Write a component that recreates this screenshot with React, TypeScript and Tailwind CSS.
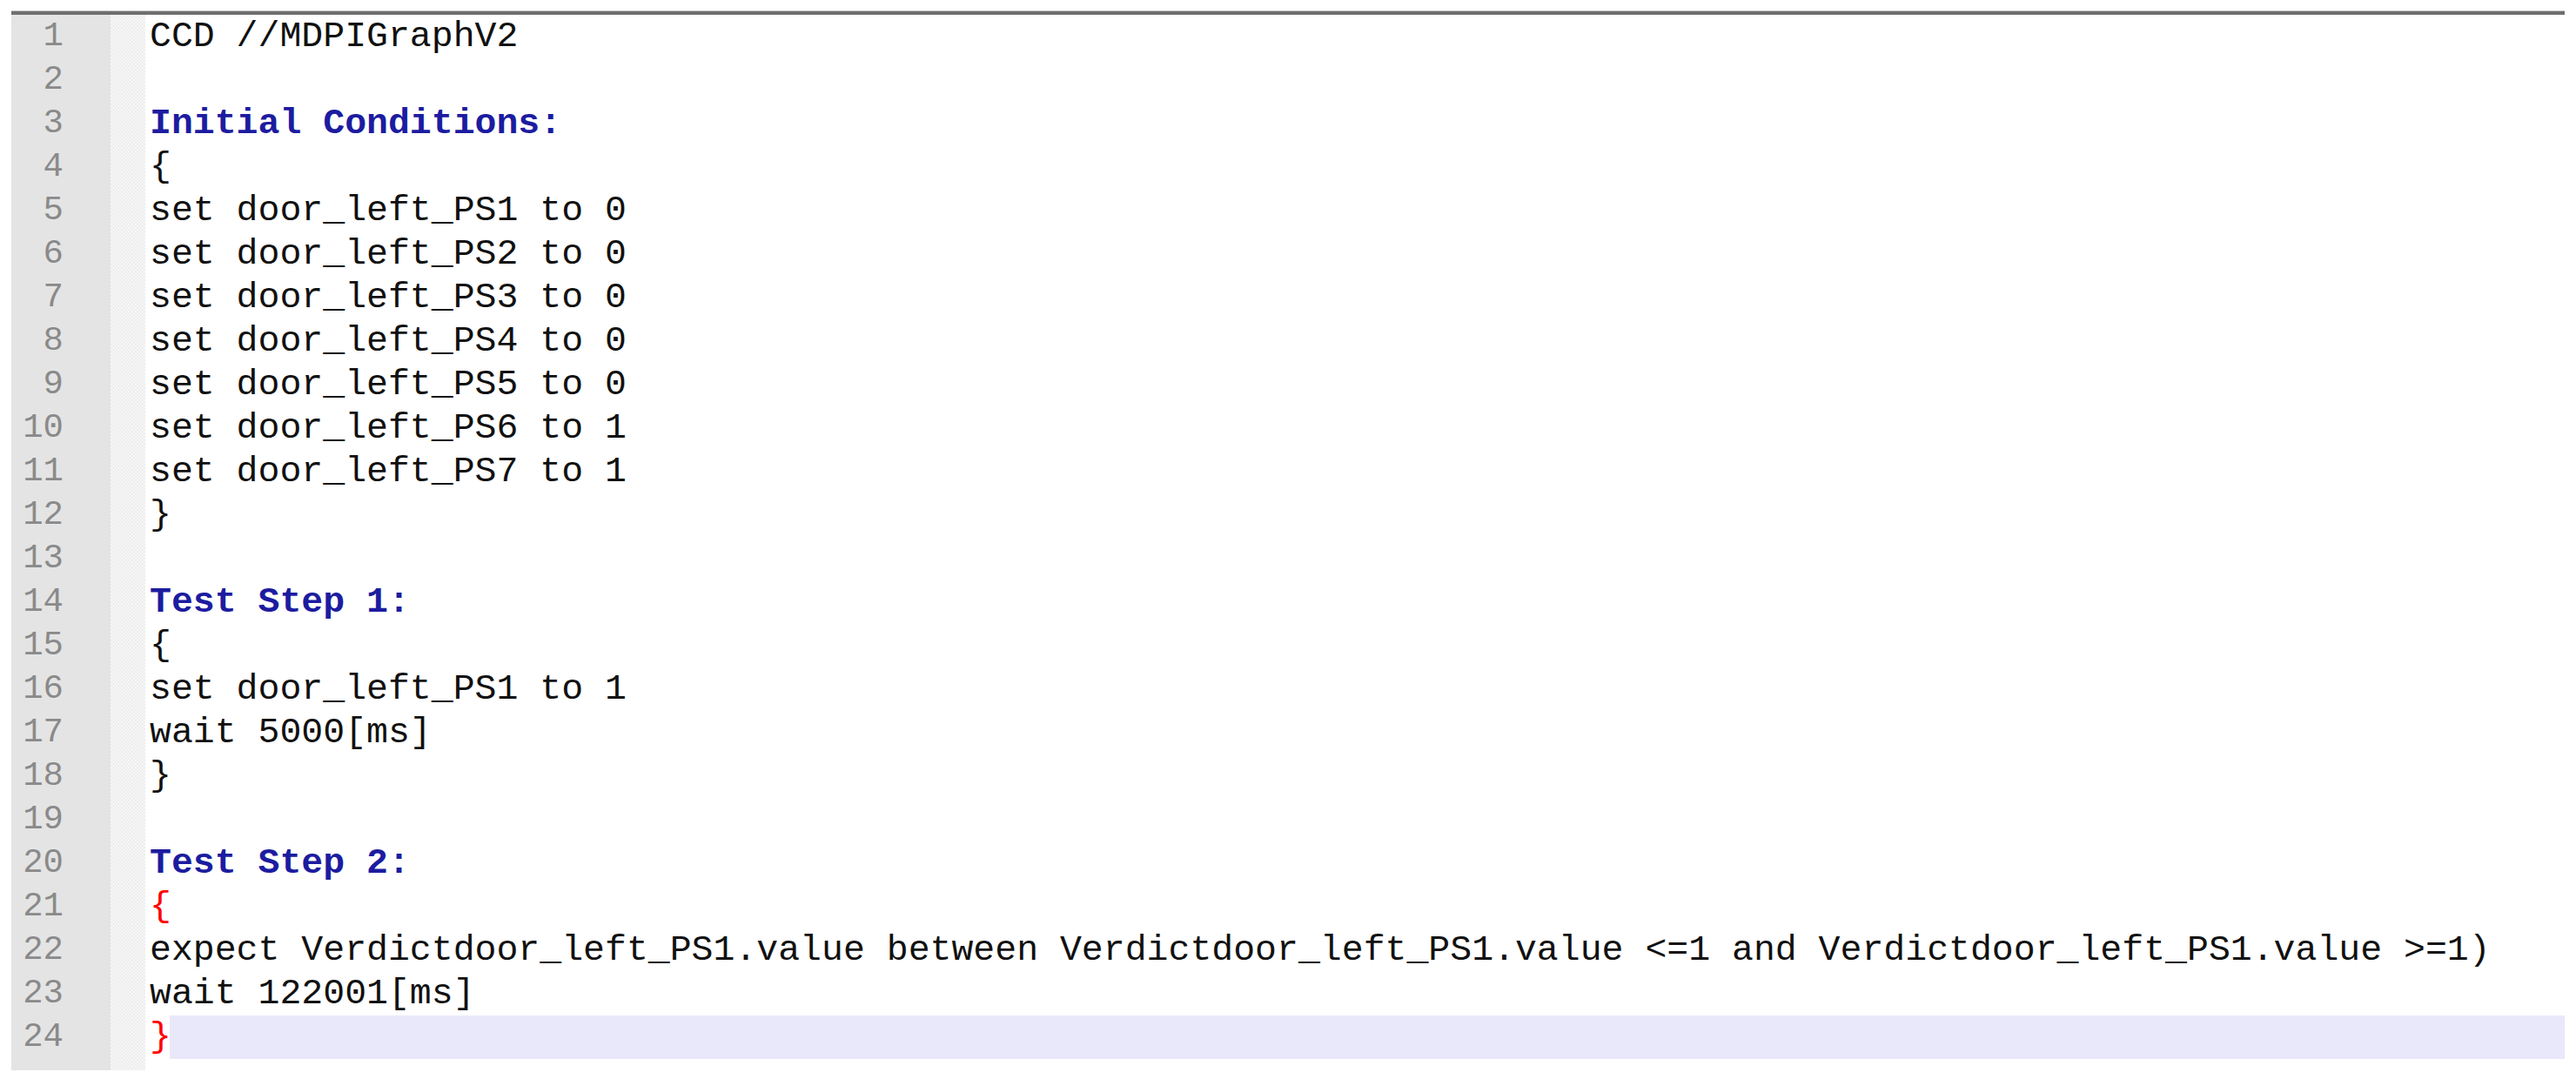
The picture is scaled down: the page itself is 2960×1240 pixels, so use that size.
const lines: { text: string; kind?: 'kw' | 'brace' }[] = [
  { text: 'CCD //MDPIGraphV2' },
  { text: '' },
  { text: 'Initial Conditions:', kind: 'kw' },
  { text: '{' },
  { text: 'set door_left_PS1 to 0' },
  { text: 'set door_left_PS2 to 0' },
  { text: 'set door_left_PS3 to 0' },
  { text: 'set door_left_PS4 to 0' },
  { text: 'set door_left_PS5 to 0' },
  { text: 'set door_left_PS6 to 1' },
  { text: 'set door_left_PS7 to 1' },
  { text: '}' },
  { text: '' },
  { text: 'Test Step 1:', kind: 'kw' },
  { text: '{' },
  { text: 'set door_left_PS1 to 1' },
  { text: 'wait 5000[ms]' },
  { text: '}' },
  { text: '' },
  { text: 'Test Step 2:', kind: 'kw' },
  { text: '{', kind: 'brace' },
  { text: 'expect Verdictdoor_left_PS1.value between Verdictdoor_left_PS1.value <=1 and Verdictdoor_left_PS1.value >=1)' },
  { text: 'wait 122001[ms]' },
  { text: '}', kind: 'brace' },
]

const mono = { fontFamily: '"Liberation Mono", "Courier New", monospace' }

export default function App() {
  const last = lines.length - 1

  return (
    <div className="w-[2960px] h-[1240px] bg-white pt-[12px] pl-[13px]">
      <div className="w-[2934px] flex flex-col">
        {/* top border */}
        <div className="h-[1px] bg-[#c4c4c4]" />
        <div className="h-[4px] bg-[#6f6f6f]" />

        <div className="flex">
          {/* line numbers */}
          <div className="w-[114px] bg-[#e4e4e4] pb-[13px] flex flex-col" style={mono}>
            {lines.map((_, i) => (
              <div
                key={i}
                className="h-[50px] leading-[50px] text-[39px] text-[#8a8a8a] text-right pr-[54px]"
              >
                {i + 1}
              </div>
            ))}
          </div>

          {/* fold margin */}
          <div className="w-[40px] bg-[#f1f1f1] bg-[repeating-conic-gradient(#eeeeee_0%_25%,#f6f6f6_0%_50%)] bg-[length:4px_4px]" />

          {/* code */}
          <div className="flex-1 flex flex-col" style={mono}>
            {lines.map((line, i) => {
              if (i === last) {
                return (
                  <div key={i} className="h-[50px] flex">
                    <span className="pl-[5px] leading-[50px] text-[41.5px] text-[#ff0000] bg-white">{'}'}</span>
                    <div className="flex-1 bg-[#e8e8fa] ml-[-2px]" />
                  </div>
                )
              }
              return (
                <div
                  key={i}
                  className={
                    'h-[50px] pl-[5px] leading-[50px] text-[41.5px] whitespace-pre ' +
                    (line.kind === 'kw'
                      ? 'font-bold text-[#1c1ca0]'
                      : line.kind === 'brace'
                        ? 'text-[#ff0000]'
                        : 'text-[#111111]')
                  }
                >
                  {line.text}
                </div>
              )
            })}
          </div>
        </div>
      </div>
    </div>
  )
}
